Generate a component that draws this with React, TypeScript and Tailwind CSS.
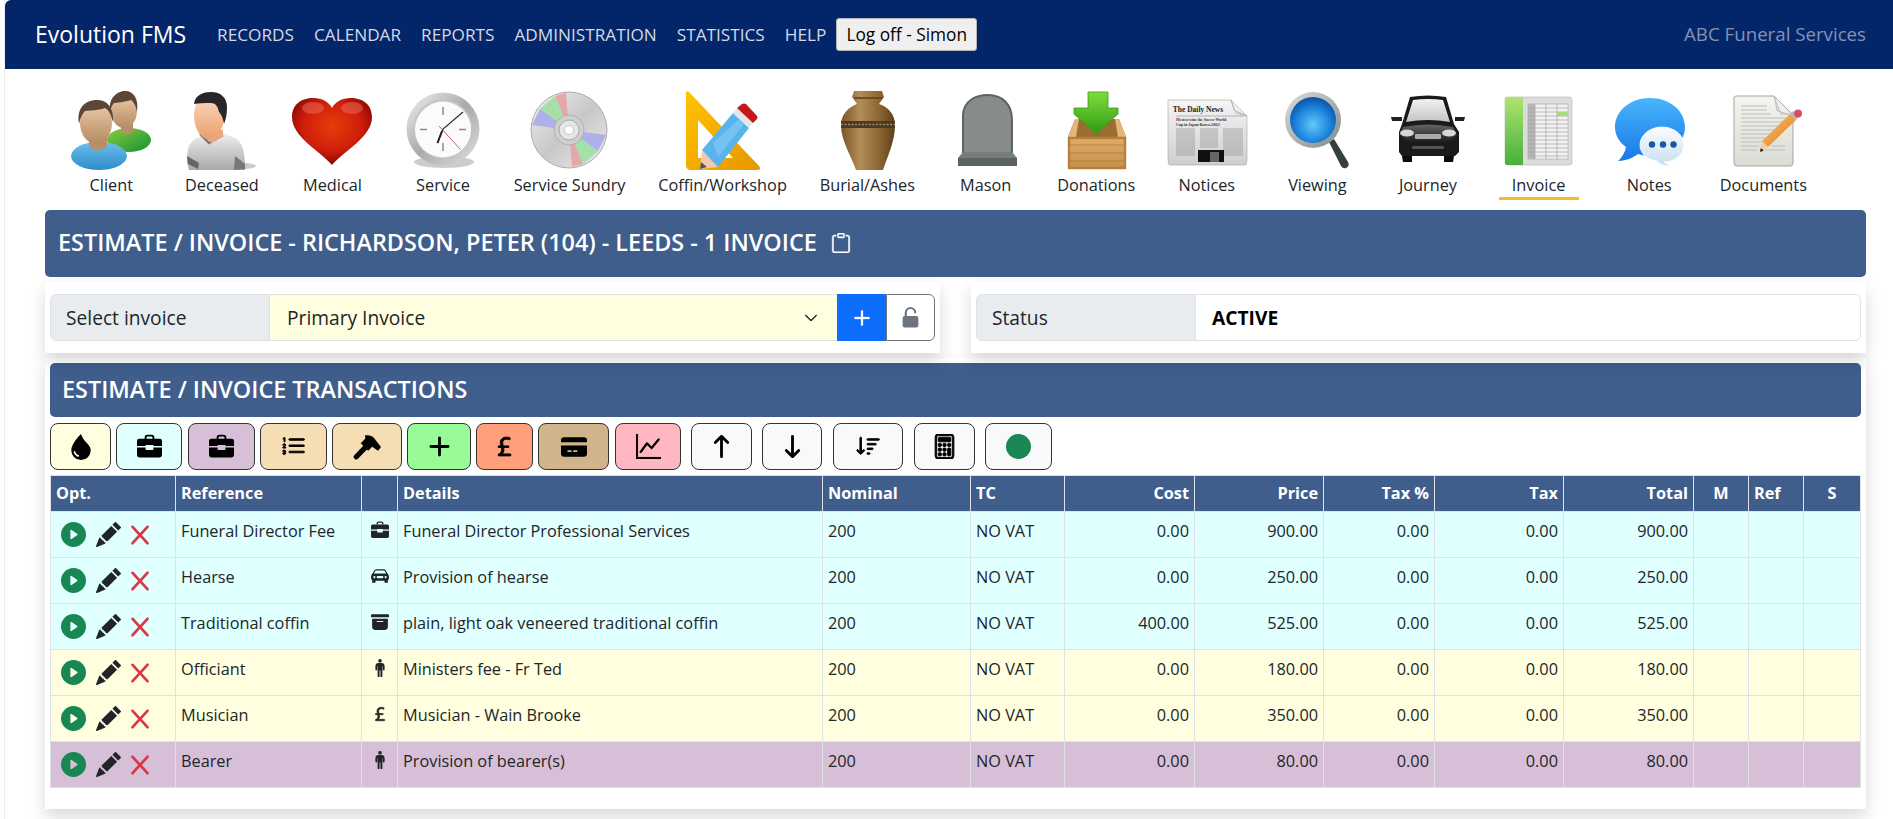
import type { ReactNode } from "react"
import {
  BsArchiveFill,
  BsArrowDown,
  BsArrowUp,
  BsCalculator,
  BsCarFrontFill,
  BsChevronDown,
  BsCircleFill,
  BsClipboard,
  BsCurrencyPound,
  BsGraphUp,
  BsListOl,
  BsPencilFill,
  BsPersonStanding,
  BsPlayCircleFill,
  BsPlusLg,
  BsSortDown,
  BsXLg,
} from "react-icons/bs"

const Pic = ({ children }: { children: ReactNode }) => (
  <svg viewBox="0 0 80 80" className="h-[80px] w-[80px] shrink-0 overflow-visible">
    {children}
  </svg>
)

const ClientIcon = () => (
  <Pic>
    <defs>
      <linearGradient id="clGreen" x1="0" y1="0" x2="1" y2="1">
        <stop offset="0" stopColor="#8ccb3f" />
        <stop offset="1" stopColor="#129233" />
      </linearGradient>
      <linearGradient id="clBlue" x1="0" y1="0" x2="0" y2="1">
        <stop offset="0" stopColor="#6cbdea" />
        <stop offset="1" stopColor="#2f8ccb" />
      </linearGradient>
      <linearGradient id="clSkin" x1="0" y1="0" x2="0" y2="1">
        <stop offset="0" stopColor="#eccdaa" />
        <stop offset="1" stopColor="#b58a62" />
      </linearGradient>
    </defs>
    <ellipse cx="58" cy="50" rx="22" ry="12" fill="url(#clGreen)" />
    <path d="M50 30h12v12q-6 5-12 0z" fill="#b98f69" />
    <ellipse cx="53" cy="21" rx="13" ry="17" fill="url(#clSkin)" />
    <path d="M39 22C37 7 47 1 54 1c9 0 14 8 12 21-1-6-3-10-6-12-6 2-15 3-17 3-2 2-3 5-4 9z" fill="#5e4636" />
    <ellipse cx="28" cy="66" rx="28" ry="14" fill="url(#clBlue)" />
    <path d="M18 46h18v10q-9 9-18 0z" fill="#b98f69" />
    <ellipse cx="25" cy="33" rx="16" ry="21" fill="url(#clSkin)" />
    <path d="M8 34C5 16 16 10 26 10c10 0 17 7 16 22-2-7-4-12-8-14-8 3-14 2-20 3-3 3-5 8-6 13z" fill="#5e4636" />
  </Pic>
)

const DeceasedIcon = () => (
  <Pic>
    <defs>
      <linearGradient id="deShirt" x1="0" y1="0" x2="0" y2="1">
        <stop offset="0" stopColor="#f0f0f0" />
        <stop offset="1" stopColor="#a8a8a8" />
      </linearGradient>
      <linearGradient id="deSkin" x1="0" y1="0" x2="0" y2="1">
        <stop offset="0" stopColor="#fcdcc2" />
        <stop offset="1" stopColor="#eb9f6f" />
      </linearGradient>
    </defs>
    <ellipse cx="48" cy="76" rx="26" ry="4" fill="#ccc" />
    <path d="M5 72c0-14 2-20 10-24l12-5 14 0 12 5c7 4 10 12 10 32H7z" fill="url(#deShirt)" />
    <path d="M52 80l1-14 10 8v5z" fill="#777" />
    <path d="M5 66l12 7-1 6-10-5z" fill="#666" />
    <path d="M18 44l9 9 14-8" fill="none" stroke="#777" strokeWidth="2.4" />
    <path d="M20 40h21v6l-11 7-10-7z" fill="#eaa77c" />
    <ellipse cx="27" cy="26" rx="15" ry="23" fill="url(#deSkin)" />
    <path d="M12 14C13 5 21 2 29 2c10 0 16 6 16 15 0 7-1 12-3 17-1-5-2-9-5-12-1-5-3-9-8-9-7 0-12 0-17 1z" fill="#272727" />
  </Pic>
)

const MedicalIcon = () => (
  <Pic>
    <defs>
      <radialGradient id="heartFill" cx="0.5" cy="0.42" r="0.62">
        <stop offset="0" stopColor="#e63d0a" />
        <stop offset="0.6" stopColor="#cf1d0b" />
        <stop offset="1" stopColor="#7a0300" />
      </radialGradient>
    </defs>
    <path d="M40 75C27 60 0 47 0 27 0 14 10 8 21 8c9 0 16 4 19 10 3-6 10-10 19-10 11 0 21 6 21 19 0 20-27 33-40 48z" fill="url(#heartFill)" />
    <ellipse cx="21" cy="18" rx="11" ry="6" fill="#f07a66" opacity="0.45" />
    <ellipse cx="60" cy="18" rx="11" ry="6" fill="#f07a66" opacity="0.45" />
  </Pic>
)

const ServiceIcon = () => (
  <Pic>
    <defs>
      <linearGradient id="clockRing" x1="0" y1="0" x2="1" y2="1">
        <stop offset="0" stopColor="#f4f4f4" />
        <stop offset="0.5" stopColor="#a9a9a9" />
        <stop offset="1" stopColor="#e2e2e2" />
      </linearGradient>
    </defs>
    <ellipse cx="41" cy="72" rx="30" ry="6" fill="#ccc" />
    <circle cx="40" cy="39" r="36.5" fill="url(#clockRing)" />
    <circle cx="40" cy="39" r="29.5" fill="#c4c4c4" />
    <circle cx="40" cy="39.5" r="28" fill="#fbfbfb" />
    <path d="M40 17v8M40 53v8M17 39.500h7M56 39.500h7" stroke="#8d8d8d" strokeWidth="1.500" />
    <path d="M36 36l21.500 23.500" stroke="#d5404a" strokeWidth="0.900" />
    <path d="M34.500 53L40 39l20-17" stroke="#2d2d2d" strokeWidth="1.200" fill="none" />
    <path d="M34.500 53L39 41" stroke="#222" strokeWidth="2" />
  </Pic>
)

const SundryIcon = () => (
  <Pic>
    <defs>
      <linearGradient id="cdFill" x1="0" y1="0" x2="1" y2="1">
        <stop offset="0" stopColor="#f1f1f1" />
        <stop offset="0.5" stopColor="#c8c8c8" />
        <stop offset="1" stopColor="#ededed" />
      </linearGradient>
    </defs>
    <circle cx="39" cy="40" r="38" fill="url(#cdFill)" stroke="#9c9c9c" strokeWidth="0.800" />
    <path d="M39 40L25 6 36 3z" fill="#e5a7a7" />
    <path d="M39 40L10 19 25 6z" fill="#a4e0a8" />
    <path d="M39 40L2 35 10 19z" fill="#aeb0ea" />
    <path d="M39 40L53 74 42 77z" fill="#e5a7a7" />
    <path d="M39 40L68 61 53 74z" fill="#a4e0a8" />
    <path d="M39 40L76 45 68 61z" fill="#aeb0ea" />
    <circle cx="39" cy="40" r="15" fill="#cfcfcf" stroke="#a8a8a8" strokeWidth="0.800" />
    <circle cx="39" cy="40" r="10" fill="#e6e6e6" stroke="#9d9d9d" strokeWidth="0.800" />
    <circle cx="39" cy="40" r="4.500" fill="#fff" stroke="#aaa" strokeWidth="0.600" />
  </Pic>
)

const CoffinIcon = () => (
  <Pic>
    <defs>
      <linearGradient id="sqFill" x1="0" y1="0" x2="1" y2="1">
        <stop offset="0" stopColor="#ffc400" />
        <stop offset="1" stopColor="#e79600" />
      </linearGradient>
    </defs>
    <path fillRule="evenodd" d="M3 3q0-3 3-1l70 74q3 4-2 4H8q-5 0-5-5zM15 30v38h35z" fill="url(#sqFill)" />
    <path d="M17 79l2-19 16 17z" fill="#f3c9ad" />
    <path d="M17 79l1-7 6 5z" fill="#555" />
    <path d="M19 60L50 23l16 15-31 39z" fill="#5ab4ec" />
    <path d="M30 53L56 29l5 5-26 33z" fill="#8cd0f6" opacity="0.5" />
    <path d="M50 23l4-5 16 15-4 5z" fill="#e6e6e6" />
    <path d="M54 18l5-4q2-1 4 0l11 12q1 2 0 3l-4 4z" fill="#c4161c" />
  </Pic>
)

const BurialIcon = () => (
  <Pic>
    <defs>
      <linearGradient id="urnFill" x1="0" y1="0" x2="1" y2="0">
        <stop offset="0" stopColor="#7a5427" />
        <stop offset="0.35" stopColor="#b38c58" />
        <stop offset="0.7" stopColor="#8d6733" />
        <stop offset="1" stopColor="#5e3f1c" />
      </linearGradient>
    </defs>
    <path d="M27 1h28l2 6-5 7c9 3 16 10 16 21 0 16-7 30-12 45H29c-5-15-15-29-15-45 0-11 8-18 16-21l-5-7z" fill="url(#urnFill)" />
    <path d="M27 8h28" stroke="#5b3d1a" strokeWidth="1.500" />
    <path d="M14 31h54v7H14z" fill="#4c3a26" />
    <path d="M14 34.500h54" stroke="#a08a6a" strokeWidth="1.500" strokeDasharray="2 1.500" />
  </Pic>
)

const MasonIcon = () => (
  <Pic>
    <path d="M17 63V26C17 10 31 5 42 5c14 0 24 9 24 25v33z" fill="#878c8a" stroke="#5c6361" strokeWidth="2" />
    <path d="M17 62h49l5 6H12z" fill="#757c7a" />
    <path d="M12 68h59v8H12z" fill="#5b6361" />
  </Pic>
)

const DonationsIcon = () => (
  <Pic>
    <defs>
      <linearGradient id="boxFill" x1="0" y1="0" x2="0" y2="1">
        <stop offset="0" stopColor="#e0ae6a" />
        <stop offset="1" stopColor="#c48f4b" />
      </linearGradient>
      <linearGradient id="arrFill" x1="0" y1="0" x2="0" y2="1">
        <stop offset="0" stopColor="#7fdc3a" />
        <stop offset="1" stopColor="#2f9a14" />
      </linearGradient>
    </defs>
    <path d="M19 29h44l7 18H12z" fill="#9c6d33" />
    <path d="M32 2h20v16h10v6L40 44 18 24v-6h14z" fill="url(#arrFill)" stroke="#3c9a1e" strokeWidth="0.800" />
    <path d="M12 47l7-18 4 0-3 18zM70 47l-7-18-4 0 3 18z" fill="#e2b87a" />
    <rect x="12" y="47" width="58" height="32" rx="1.500" fill="url(#boxFill)" />
    <path d="M12 55h58M12 63h58M12 71h58" stroke="#a87735" strokeWidth="0.700" />
    <path d="M13 47v32M69 47v32M12 48h58M12 78h58" stroke="#b67f3c" strokeWidth="2.400" />
  </Pic>
)

const NoticesIcon = () => (
  <Pic>
    <defs>
      <linearGradient id="paperFill" x1="0" y1="0" x2="0" y2="1">
        <stop offset="0" stopColor="#f5f5f5" />
        <stop offset="1" stopColor="#cfcfcf" />
      </linearGradient>
    </defs>
    <path d="M1 10h63l16 16v44l-1 5H2l-1-5z" fill="url(#paperFill)" stroke="#a5a5a5" strokeWidth="0.600" />
    <path d="M64 10l3 10 13 6-11-3z" fill="#ddd" stroke="#999" strokeWidth="0.500" />
    <text x="31" y="22" textAnchor="middle" fontFamily="'Liberation Serif', serif" fontWeight="700" fontSize="7.500" fill="#222">
      The Daily News
    </text>
    <path d="M9 26h68" stroke="#777" strokeWidth="0.500" />
    <text x="9" y="31" fontFamily="'Liberation Serif', serif" fontWeight="700" fontSize="3.900" fill="#333">
      Mexico wins the Soccer World
    </text>
    <text x="9" y="35.500" fontFamily="'Liberation Serif', serif" fontWeight="700" fontSize="3.900" fill="#333">
      Cup in Japan-Korea 2002!
    </text>
    <path
      d="M9 39h19M9 41h19M9 43h19M9 45h19M9 47h19M9 49h19M9 51h19M9 53h19M9 55h19M9 57h19M9 59h19M9 61h19M9 63h19M9 65h19M33 39h18M33 41h18M33 43h18M33 45h18M33 47h18M33 49h18M33 51h18M33 53h18M33 55h18M33 57h18M56 39h20M56 41h20M56 43h20M56 45h20M56 47h20M56 49h20M56 51h20M56 53h20M56 55h20M56 57h20M56 59h20M56 61h20M56 63h20M56 65h20"
      stroke="#8c8c8c"
      strokeWidth="0.700"
    />
    <rect x="31" y="60" width="26" height="12" fill="#111" />
    <rect x="43" y="62" width="9" height="10" fill="#666" />
  </Pic>
)

const ViewingIcon = () => (
  <Pic>
    <defs>
      <radialGradient id="lensFill" cx="0.5" cy="0.6" r="0.6">
        <stop offset="0" stopColor="#63c8fa" />
        <stop offset="0.6" stopColor="#1c86dd" />
        <stop offset="1" stopColor="#0a52a6" />
      </radialGradient>
      <linearGradient id="lensRing" x1="0" y1="0" x2="1" y2="1">
        <stop offset="0" stopColor="#dcdcdc" />
        <stop offset="1" stopColor="#7f8a8c" />
      </linearGradient>
    </defs>
    <path d="M52 52l5-3 14 23q2 4-2 6-3 1-5-2z" fill="#34403f" />
    <circle cx="36" cy="30" r="28" fill="url(#lensRing)" />
    <circle cx="36" cy="30" r="23" fill="url(#lensFill)" />
  </Pic>
)

const JourneyIcon = () => (
  <Pic>
    <defs>
      <linearGradient id="carGlass" x1="0" y1="0" x2="0" y2="1">
        <stop offset="0" stopColor="#f2f2f2" />
        <stop offset="1" stopColor="#c4c4c4" />
      </linearGradient>
      <linearGradient id="carBody" x1="0" y1="0" x2="0" y2="1">
        <stop offset="0" stopColor="#64646c" />
        <stop offset="1" stopColor="#1c1c1c" />
      </linearGradient>
    </defs>
    <path d="M13 60h11v12H15zM56 60h11l-2 12h-9z" fill="#0c0c0c" />
    <path d="M3 27h11v4H4zM67 27h10l-1 4H67z" fill="#222" />
    <path d="M14 34L22 7q18-3 36 0l8 27 5 8v20l-4 4H14l-3-4V42z" fill="#1a1a1a" />
    <path d="M18 32l7-22q15-2 30 0l7 22q-22-4-44 0z" fill="url(#carGlass)" />
    <path d="M15 37q25-5 50 0l4 8-8 7H20l-8-7z" fill="url(#carBody)" />
    <ellipse cx="19" cy="43" rx="7" ry="3.500" fill="#d8d8d8" />
    <ellipse cx="61" cy="43" rx="7" ry="3.500" fill="#d8d8d8" />
    <rect x="27" y="44" width="26" height="5" rx="1" fill="#aaa" />
    <rect x="24" y="56" width="32" height="3" rx="1" fill="#555" />
  </Pic>
)

const InvoiceIcon = () => (
  <Pic>
    <defs>
      <linearGradient id="invStrip" x1="0" y1="0" x2="0" y2="1">
        <stop offset="0" stopColor="#aee56f" />
        <stop offset="1" stopColor="#46b03a" />
      </linearGradient>
    </defs>
    <rect x="6" y="7" width="67" height="68" rx="2.500" fill="#dcdcdc" stroke="#b5b5b5" strokeWidth="0.600" />
    <path d="M6 9.500Q6 7 8.500 7H24v68H8.500Q6 75 6 72.500z" fill="url(#invStrip)" />
    <rect x="29" y="14" width="40" height="55" fill="#f1f1f1" stroke="#999" strokeWidth="0.500" />
    <path d="M29 14h7v55h-7z" fill="#b5b5b5" />
    <path d="M29 18h40M29 22h40M29 26h40M29 30h40M29 34h40M29 38h40M29 42h40M29 46h40M29 50h40M29 54h40M29 58h40M29 62h40M29 66h40M36 14v55M47 14v55M58 14v55" stroke="#a3a3a3" strokeWidth="0.700" />
    <rect x="58" y="22" width="11" height="4" fill="#a6dd74" />
  </Pic>
)

const NotesIcon = () => (
  <Pic>
    <defs>
      <linearGradient id="noteBig" x1="0" y1="0" x2="0" y2="1">
        <stop offset="0" stopColor="#47b5fb" />
        <stop offset="1" stopColor="#1a78e6" />
      </linearGradient>
      <linearGradient id="noteSmall" x1="0" y1="0" x2="0" y2="1">
        <stop offset="0" stopColor="#fafcfe" />
        <stop offset="1" stopColor="#c8deef" />
      </linearGradient>
    </defs>
    <path d="M41 8c20 0 35 13 35 29 0 16-15 29-35 29-4 0-8-1-12-2-4 3-11 7-20 7 4-3 7-9 8-14C10 52 6 45 6 37 6 21 21 8 41 8z" fill="url(#noteBig)" />
    <path d="M53 37c12 0 22 8 22 18s-10 17-20 17l6 4c-6 0-11-2-13-5-10-1-17-8-17-16 0-10 10-18 22-18z" fill="url(#noteSmall)" stroke="#fff" strokeWidth="0.800" />
    <circle cx="43" cy="54.500" r="3.200" fill="#17599f" />
    <circle cx="54" cy="54.500" r="3.200" fill="#17599f" />
    <circle cx="64.500" cy="54.500" r="3.200" fill="#17599f" />
  </Pic>
)

const DocumentsIcon = () => (
  <Pic>
    <defs>
      <linearGradient id="docPage" x1="0" y1="0" x2="0" y2="1">
        <stop offset="0" stopColor="#f4f4f0" />
        <stop offset="1" stopColor="#dcdcd6" />
      </linearGradient>
      <linearGradient id="docPencil" x1="0" y1="0" x2="1" y2="1">
        <stop offset="0" stopColor="#fbc272" />
        <stop offset="1" stopColor="#dd7d1a" />
      </linearGradient>
    </defs>
    <path d="M11 8q0-2 2-2h38l19 19v48q0 3-3 3H14q-3 0-3-3z" fill="url(#docPage)" stroke="#a5a5a0" strokeWidth="1" />
    <path d="M51 6l3 15 16 4-12-1z" fill="#d5d5d0" stroke="#aaa" strokeWidth="0.500" />
    <path d="M18 16h26M18 20h26M18 24h30M18 28h45M18 32h45M18 36h40M18 40h34M18 44h30M18 48h26M18 52h22M18 56h18M48 56h14M18 60h16M42 60h20" stroke="#bdbdb8" strokeWidth="1" />
    <path d="M37 62l2-11 6 6z" fill="#f0cfa6" />
    <path d="M37 62l.8-4 3 2.500z" fill="#222" />
    <path d="M39 51l28-27 6 6-28 27z" fill="url(#docPencil)" />
    <path d="M67 24l3-3 6 6-3 3z" fill="#b8b8b8" />
    <circle cx="75" cy="23.500" r="4" fill="#d8505a" />
  </Pic>
)

const tabs = [
  { label: "Client", icon: <ClientIcon />, width: "min-w-[80px]" },
  { label: "Deceased", icon: <DeceasedIcon />, width: "min-w-[80px]" },
  { label: "Medical", icon: <MedicalIcon />, width: "min-w-[80px]" },
  { label: "Service", icon: <ServiceIcon />, width: "min-w-[80px]" },
  { label: "Service Sundry", icon: <SundryIcon />, width: "min-w-[80px]" },
  { label: "Coffin/Workshop", icon: <CoffinIcon />, width: "min-w-[133px]" },
  { label: "Burial/Ashes", icon: <BurialIcon />, width: "min-w-[80px]" },
  { label: "Mason", icon: <MasonIcon />, width: "min-w-[80px]" },
  { label: "Donations", icon: <DonationsIcon />, width: "min-w-[80px]" },
  { label: "Notices", icon: <NoticesIcon />, width: "min-w-[80px]" },
  { label: "Viewing", icon: <ViewingIcon />, width: "min-w-[80px]" },
  { label: "Journey", icon: <JourneyIcon />, width: "min-w-[80px]" },
  { label: "Invoice", icon: <InvoiceIcon />, width: "min-w-[80px]", active: true },
  { label: "Notes", icon: <NotesIcon />, width: "min-w-[80px]" },
  { label: "Documents", icon: <DocumentsIcon />, width: "min-w-[80px]" },
]

const DropIcon = () => (
  <svg viewBox="0 0 16 16" className="h-[26px] w-[26px]" fill="currentColor">
    <path fillRule="evenodd" d="M8 0c.8 2.500 2.300 4.200 3.600 5.600C12.900 7.100 14 8.400 14 10a6 6 0 0 1-12 0C2 5.700 8 0 8 0zM4.400 10.500l-1 .2c.3 1.700 1.500 3 3.200 3.400l.2-1c-1.300-.3-2.200-1.300-2.400-2.600z" />
  </svg>
)

const CardIcon = () => (
  <svg viewBox="0 0 16 16" className="h-[26px] w-[26px]" fill="currentColor">
    <path fillRule="evenodd" d="M0 4a2 2 0 0 1 2-2h12a2 2 0 0 1 2 2v1H0zm0 3v5a2 2 0 0 0 2 2h12a2 2 0 0 0 2-2V7zm4 3h2.500v1H4zm3.500 0H10v1H7.500z" />
  </svg>
)

const CaseIcon = ({ className }: { className: string }) => (
  <svg viewBox="0 0 16 16" className={className} fill="currentColor">
    <path d="M5.500 3.200V2.200A1.200 1.200 0 0 1 6.700 1h2.600a1.200 1.200 0 0 1 1.200 1.200v1" fill="none" stroke="currentColor" strokeWidth="1.200" />
    <path d="M0 4.500A1.500 1.500 0 0 1 1.500 3h13A1.500 1.500 0 0 1 16 4.500V7.600h-5.500V7h-5v.6H0z" />
    <path d="M0 8.600h5.500v1.100a.6.6 0 0 0 .6.600h3.800a.6.600 0 0 0 .6-.6V8.600H16v4.900a1.500 1.500 0 0 1-1.500 1.500h-13A1.500 1.500 0 0 1 0 13.500z" />
  </svg>
)

const HammerIcon = () => (
  <svg viewBox="0 0 16 16" className="h-[28px] w-[28px]" fill="currentColor">
    <path d="M1.900 13.600L7 8.300" stroke="currentColor" strokeWidth="3" strokeLinecap="round" />
    <path d="M6.900 1.300C9 1 11 1.500 12 2.800L16 8l-1.700 2.200L11 7.800l-2.300 2.400-4.300-4.400L7 3.300z" />
  </svg>
)

const LockIcon = () => (
  <svg viewBox="0 0 16 20" className="h-[21px] w-[19px]" fill="currentColor">
    <path d="M3.500 9V5.500a4.500 4.500 0 0 1 9 0V6" fill="none" stroke="currentColor" strokeWidth="2" />
    <rect x="0.500" y="8.500" width="15" height="11" rx="2" />
  </svg>
)

const iconSize = "h-[25px] w-[25px]"

const toolbar = [
  { icon: <DropIcon />, className: "w-[61px] bg-[#ffffe0]" },
  { icon: <CaseIcon className={iconSize} />, className: "w-[66px] bg-[#e0ffff]" },
  { icon: <CaseIcon className={iconSize} />, className: "ml-[1px] w-[67px] bg-[#d8bfd8]" },
  { icon: <BsListOl className={iconSize} strokeWidth={0.6} />, className: "w-[67px] bg-[#f5deb3]" },
  { icon: <HammerIcon />, className: "w-[70px] bg-[#f5deb3]" },
  { icon: <BsPlusLg className={iconSize} strokeWidth={0.8} />, className: "w-[64px] bg-[#98fb98]" },
  { icon: <BsCurrencyPound className={iconSize} strokeWidth={0.6} />, className: "w-[57px] bg-[#ffa07a]" },
  { icon: <CardIcon />, className: "w-[71px] bg-[#d2b48c]" },
  { icon: <BsGraphUp className={iconSize} strokeWidth={0.6} />, className: "ml-[1px] w-[66px] bg-[#ffb6c1]" },
  { icon: <BsArrowUp className={iconSize} strokeWidth={0.8} />, className: "ml-[5px] w-[61px] bg-[#f8f9fa]" },
  { icon: <BsArrowDown className={iconSize} strokeWidth={0.8} />, className: "ml-[5px] w-[60px] bg-[#f8f9fa]" },
  { icon: <BsSortDown className={iconSize} strokeWidth={0.6} />, className: "ml-[6px] w-[70px] bg-[#f8f9fa]" },
  { icon: <BsCalculator className={iconSize} strokeWidth={0.6} />, className: "ml-[6px] w-[61px] bg-[#f8f9fa]" },
  { icon: <BsCircleFill className={`${iconSize} text-[#198754]`} />, className: "ml-[5px] w-[67px] bg-[#f8f9fa]" },
]

const columns = [
  { label: "Opt.", className: "w-[125px] text-left" },
  { label: "Reference", className: "w-[186px] text-left" },
  { label: "", className: "w-[36px] text-left" },
  { label: "Details", className: "w-[425px] text-left" },
  { label: "Nominal", className: "w-[148px] text-left" },
  { label: "TC", className: "w-[94px] text-left" },
  { label: "Cost", className: "w-[130px] text-right" },
  { label: "Price", className: "w-[129px] text-right" },
  { label: "Tax %", className: "w-[111px] text-right" },
  { label: "Tax", className: "w-[129px] text-right" },
  { label: "Total", className: "w-[130px] text-right" },
  { label: "M", className: "w-[55px] text-center" },
  { label: "Ref", className: "w-[55px] text-left" },
  { label: "S", className: "w-[57px] text-center" },
]

const rows = [
  { ref: "Funeral Director Fee", icon: <CaseIcon className="h-[18px] w-[18px]" />, details: "Funeral Director Professional Services", cost: "0.00", price: "900.00", bg: "bg-[#e0ffff]" },
  { ref: "Hearse", icon: <BsCarFrontFill />, details: "Provision of hearse", cost: "0.00", price: "250.00", bg: "bg-[#e0ffff]" },
  { ref: "Traditional coffin", icon: <BsArchiveFill />, details: "plain, light oak veneered traditional coffin", cost: "400.00", price: "525.00", bg: "bg-[#e0ffff]" },
  { ref: "Officiant", icon: <BsPersonStanding strokeWidth={0.2} />, details: "Ministers fee - Fr Ted", cost: "0.00", price: "180.00", bg: "bg-[#ffffe0]" },
  { ref: "Musician", icon: <BsCurrencyPound strokeWidth={0.6} />, details: "Musician - Wain Brooke", cost: "0.00", price: "350.00", bg: "bg-[#ffffe0]" },
  { ref: "Bearer", icon: <BsPersonStanding strokeWidth={0.2} />, details: "Provision of bearer(s)", cost: "0.00", price: "80.00", bg: "bg-[#d8bfd8]" },
]

const cell = "border border-[#dee2e6] px-[5px] pt-[7px] align-top"
const navLinks = ["RECORDS", "CALENDAR", "REPORTS", "ADMINISTRATION", "STATISTICS", "HELP"]

export default function App() {
  return (
    <div className="h-screen overflow-hidden bg-white pl-[4px] font-['Open_Sans',sans-serif] text-[16.3px] text-[#212529]">
      <div className="h-full border-l border-[#eeeeee]">
        <nav className="flex h-[69px] items-center rounded-tl-[6px] bg-[#03266a] pl-[30px] pr-[27px]">
          <span className="mr-[31px] text-[23px] text-white">Evolution FMS</span>
          <div className="flex items-center gap-[20px] text-[17.200px] text-[#d4d9e5]">
            {navLinks.map((link) => (
              <span key={link}>{link}</span>
            ))}
          </div>
          <button className="ml-[10px] h-[33px] w-[141px] rounded-[3px] border border-[#b5b5b5] bg-[#efefef] text-[17.300px] text-black">Log off - Simon</button>
          <span className="ml-auto text-[18.700px] text-[#8592b2]">ABC Funeral Services</span>
        </nav>

        <div className="flex pl-[51px] pt-[21px]">
          {tabs.map((tab) => (
            <div key={tab.label} className={`mx-[15.300px] flex flex-col items-center ${tab.width}`}>
              {tab.icon}
              <span className={`mt-[3px] h-[27px] w-full whitespace-nowrap text-center leading-[24px] ${tab.active ? "border-b-[3px] border-[#f4bc1c]" : ""}`}>{tab.label}</span>
            </div>
          ))}
        </div>

        <main className="ml-[40px] mt-[10px] w-[1821px]">
          <div className="flex h-[67px] items-center gap-[14px] rounded-[5px] bg-[#3f5e8c] px-[13px] pb-[2px] text-[23.400px] font-semibold text-white">
            <span>ESTIMATE / INVOICE - RICHARDSON, PETER (104) - LEEDS - 1 INVOICE</span>
            <BsClipboard className="h-[20px] w-[20px]" strokeWidth={0.4} />
          </div>

          <div className="mt-[5px] flex gap-[31px] text-[19.200px]">
            <div className="w-[895px] bg-white px-[5px] py-[12px] shadow-[0_8px_16px_rgba(0,0,0,0.15)]">
              <div className="flex h-[47px]">
                <div className="flex w-[220px] items-center rounded-l-[6px] border border-[#dee2e6] bg-[#e9ecef] pl-[15px] pt-[1px]">Select invoice</div>
                <div className="flex flex-1 items-center justify-between border-y border-[#dee2e6] bg-[#ffffe0] pl-[17px] pr-[19px] pt-[1px]">
                  <span>Primary Invoice</span>
                  <BsChevronDown className="h-[14px] w-[14px]" strokeWidth={0.8} />
                </div>
                <div className="flex w-[49px] items-center justify-center bg-[#0d6efd] text-white">
                  <BsPlusLg className="h-[20px] w-[20px]" strokeWidth={0.8} />
                </div>
                <div className="flex w-[49px] items-center justify-center rounded-r-[6px] border border-[#6c757d] text-[#6c757d]">
                  <LockIcon />
                </div>
              </div>
            </div>
            <div className="w-[895px] bg-white px-[5px] py-[12px] shadow-[0_8px_16px_rgba(0,0,0,0.15)]">
              <div className="flex h-[47px]">
                <div className="flex w-[220px] items-center rounded-l-[6px] border border-[#dee2e6] bg-[#e9ecef] pl-[15px] pt-[1px]">Status</div>
                <div className="flex flex-1 items-center rounded-r-[6px] border border-l-0 border-[#dee2e6] pl-[16px] pt-[1px] font-bold text-black">ACTIVE</div>
              </div>
            </div>
          </div>

          <section className="mt-[5px] h-[451px] bg-white px-[5px] pt-[5px] shadow-[0_8px_16px_rgba(0,0,0,0.15)]">
            <div className="flex h-[54px] items-center rounded-[5px] bg-[#3f5e8c] px-[12px] text-[23.400px] font-semibold text-white">ESTIMATE / INVOICE TRANSACTIONS</div>
            <div className="mt-[6px] flex gap-[5px]">
              {toolbar.map((button, index) => (
                <button key={index} className={`flex h-[47px] items-center justify-center rounded-[8px] border border-[#333333] text-black ${button.className}`}>
                  {button.icon}
                </button>
              ))}
            </div>
            <table className="mt-[5px] w-[1810px] table-fixed border-collapse">
              <colgroup>
                {columns.map((column) => (
                  <col key={column.label + column.className} className={column.className} />
                ))}
              </colgroup>
              <thead>
                <tr className="h-[36px] bg-[#3f5e8c] text-white">
                  {columns.map((column) => (
                    <th key={column.label + column.className} className={`border border-[#dee2e6] px-[5px] font-bold ${column.className}`}>
                      {column.label}
                    </th>
                  ))}
                </tr>
              </thead>
              <tbody>
                {rows.map((row) => (
                  <tr key={row.ref} className={`h-[46px] ${row.bg}`}>
                    <td className="border border-[#dee2e6] pl-[10px] pt-[10px] align-top">
                      <div className="flex items-center gap-[10px]">
                        <BsPlayCircleFill className="h-[25px] w-[25px] text-[#198754]" />
                        <BsPencilFill className="h-[25px] w-[25px] text-[#212529]" />
                        <BsXLg className="-ml-[2px] h-[24px] w-[22px] text-[#dc3545]" strokeWidth={0.8} preserveAspectRatio="none" />
                      </div>
                    </td>
                    <td className={cell}>{row.ref}</td>
                    <td className="border border-[#dee2e6] pt-[9px] align-top text-[18px]">
                      <div className="flex justify-center">{row.icon}</div>
                    </td>
                    <td className={cell}>{row.details}</td>
                    <td className={cell}>200</td>
                    <td className={cell}>NO VAT</td>
                    <td className={`${cell} text-right`}>{row.cost}</td>
                    <td className={`${cell} text-right`}>{row.price}</td>
                    <td className={`${cell} text-right`}>0.00</td>
                    <td className={`${cell} text-right`}>0.00</td>
                    <td className={`${cell} text-right`}>{row.price}</td>
                    <td className={cell} />
                    <td className={cell} />
                    <td className={cell} />
                  </tr>
                ))}
              </tbody>
            </table>
          </section>
        </main>
      </div>
    </div>
  )
}
